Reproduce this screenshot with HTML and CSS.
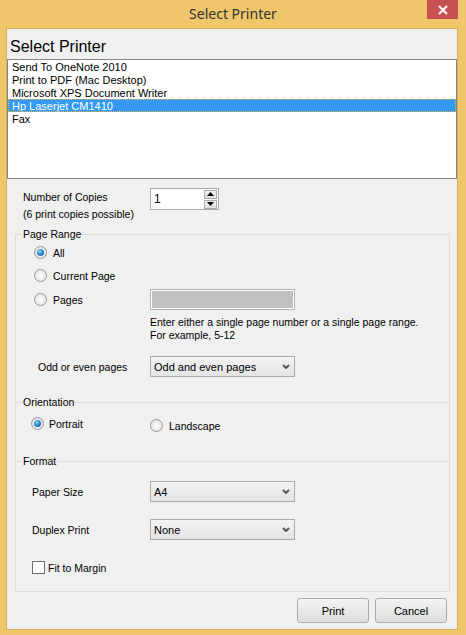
FILE: index.html
```html
<!DOCTYPE html>
<html>
<head>
<meta charset="utf-8">
<title>Select Printer</title>
<link rel="stylesheet" href="styles.css">
</head>
<body>
<div class="window">
  <div class="titlebar">
    <span></span>
    <div class="title">Select Printer</div>
    <div class="close">
      <svg width="10" height="10" viewBox="0 0 10 10"><path d="M1 1 L9 9 M9 1 L1 9" stroke="#fff" stroke-width="2" fill="none"/></svg>
    </div>
  </div>
  <div class="client">
    <div class="heading">Select Printer</div>
    <ul class="list">
      <li>Send To OneNote 2010</li>
      <li>Print to PDF (Mac Desktop)</li>
      <li>Microsoft XPS Document Writer</li>
      <li class="selected">Hp Laserjet CM1410</li>
      <li>Fax</li>
    </ul>

    <div class="copies">
      <div class="copies-label">
        <div class="line17">Number of Copies</div>
        <div class="line17">(6 print copies possible)</div>
      </div>
      <div class="spin">
        <span class="spin-value">1</span>
        <div class="spin-btns">
          <span class="spin-btn"><svg width="7" height="4" viewBox="0 0 7 4"><path d="M3.5 0 L7 4 L0 4 Z" fill="#000"/></svg></span>
          <span class="spin-btn"><svg width="7" height="4" viewBox="0 0 7 4"><path d="M0 0 L7 0 L3.5 4 Z" fill="#000"/></svg></span>
        </div>
      </div>
    </div>

    <section class="group group-range">
      <div class="legend">Page Range</div>
      <div class="group-body">
        <div class="radio-row"><span class="radio checked"></span><span>All</span></div>
        <div class="radio-row"><span class="radio"></span><span>Current Page</span></div>
        <div class="pages-row">
          <div class="radio-row tight"><span class="radio"></span><span>Pages</span></div>
          <div class="pages-input"></div>
        </div>
        <div class="help">Enter either a single page number or a single page range.<br>For example, 5-12</div>
        <div class="field-row odd-row">
          <span class="field-label">Odd or even pages</span>
          <div class="select"><span>Odd and even pages</span><svg class="chev" width="8" height="5" viewBox="0 0 8 5"><path d="M1 1 L4 4 L7 1" stroke="#555" stroke-width="2" fill="none"/></svg></div>
        </div>
      </div>
    </section>

    <section class="group group-orient">
      <div class="legend">Orientation</div>
      <div class="group-body">
        <div class="orient-row">
          <div class="orient-item"><span class="radio checked"></span><span>Portrait</span></div>
          <div class="orient-item landscape"><span class="radio"></span><span>Landscape</span></div>
        </div>
      </div>
    </section>

    <section class="group group-format">
      <div class="legend">Format</div>
      <div class="group-body">
        <div class="field-row paper-row">
          <span class="field-label">Paper Size</span>
          <div class="select"><span>A4</span><svg class="chev" width="8" height="5" viewBox="0 0 8 5"><path d="M1 1 L4 4 L7 1" stroke="#555" stroke-width="2" fill="none"/></svg></div>
        </div>
        <div class="field-row duplex-row">
          <span class="field-label">Duplex Print</span>
          <div class="select"><span>None</span><svg class="chev" width="8" height="5" viewBox="0 0 8 5"><path d="M1 1 L4 4 L7 1" stroke="#555" stroke-width="2" fill="none"/></svg></div>
        </div>
        <div class="check-row"><span class="checkbox"></span><span>Fit to Margin</span></div>
      </div>
    </section>

    <div class="buttons">
      <div class="btn">Print</div>
      <div class="btn">Cancel</div>
    </div>
  </div>
</div>
</body>
</html>
```

FILE: styles.css
```css
* { box-sizing: border-box; }
html, body {
  margin: 0;
  padding: 0;
  background: #efc66a;
}
body {
  font-family: "Liberation Sans", Arial, sans-serif;
  font-size: 10.5px;
  color: #000;
}
.window {
  width: 466px;
  height: 635px;
  background: #efc66a;
  display: flex;
  flex-direction: column;
  overflow: hidden;
}
.titlebar {
  height: 28px;
  display: grid;
  grid-template-columns: 1fr auto 1fr;
  align-items: start;
}
.title {
  font-family: "Noto Sans", "Open Sans", sans-serif;
  font-size: 14px;
  line-height: 27px;
  color: #333;
}
.close {
  justify-self: end;
  margin-right: 8px;
  width: 31px;
  height: 19px;
  background: #c75050;
  display: flex;
  align-items: center;
  justify-content: center;
}
.client {
  margin: 0 8px 5px 6px;
  border: 1px solid #d7ad55;
  background: #f0f0f0;
  height: 602px;
  overflow: hidden;
  display: flex;
  flex-direction: column;
}
.heading {
  font-size: 16px;
  line-height: 20px;
  margin-top: 8px;
  padding-left: 3px;
}
.list {
  list-style: none;
  margin: 2px 0 0 0;
  padding: 0;
  height: 120px;
  background: #fff;
  border: 1px solid #828790;
  font-size: 11px;
}
.list li {
  height: 13px;
  line-height: 14px;
  padding-left: 4px;
  white-space: nowrap;
}
.list li.selected {
  background: #3399ff;
  color: #fff;
  outline: 1px dotted #e9b65e;
  outline-offset: -1px;
}
.copies {
  display: flex;
  align-items: flex-start;
  margin-top: 9px;
  padding-left: 16px;
}
.copies-label {
  width: 127px;
  margin-top: 1px;
}
.line17 {
  line-height: 17px;
}
.spin {
  width: 69px;
  height: 22px;
  border: 1px solid #aaaaaa;
  background: #fff;
  display: flex;
  align-items: center;
  justify-content: space-between;
  padding-left: 3px;
}
.spin-value {
  font-size: 12px;
}
.spin-btns {
  display: flex;
  flex-direction: column;
  gap: 1px;
  margin-right: 1px;
}
.spin-btn {
  width: 13px;
  height: 9px;
  border: 1px solid #acacac;
  background: linear-gradient(#f2f2f2, #dedede);
  display: flex;
  align-items: center;
  justify-content: center;
}
.group {
  margin-left: 8px;
  margin-right: 7px;
  border: 1px solid #dcdcdc;
  border-bottom: none;
  display: flex;
  flex-direction: column;
}
.legend {
  align-self: flex-start;
  margin-top: -7px;
  margin-left: 6px;
  padding: 0 1px;
  line-height: 13px;
  background: #f0f0f0;
}
.group-range {
  margin-top: 11px;
}
.group-range .group-body {
  padding-left: 18px;
  padding-bottom: 25px;
}
.radio-row {
  display: flex;
  align-items: center;
  gap: 6px;
  height: 23px;
}
.radio-row.tight {
  height: auto;
}
.radio {
  width: 13px;
  height: 13px;
  border-radius: 50%;
  border: 1px solid #9a9a9a;
  background: radial-gradient(circle at 50% 50%, #ffffff 0%, #eeeeee 45%, #d6d6d6 100%);
  flex: none;
  display: flex;
  align-items: center;
  justify-content: center;
}
.radio.checked::after {
  content: "";
  width: 7px;
  height: 7px;
  border-radius: 50%;
  background: radial-gradient(circle at 40% 35%, #9ddcfb 0%, #2f86d2 45%, #0d4a8c 100%);
}
.pages-row {
  display: grid;
  grid-template-columns: 116px 145px;
  align-items: center;
  height: 25px;
}
.pages-input {
  height: 21px;
  border: 1px solid #b5b5b5;
  box-shadow: inset 0 0 0 1px #ffffff;
  background: #c0c0c0;
}
.help {
  margin-top: 4px;
  margin-left: 116px;
  line-height: 13px;
}
.field-row {
  display: grid;
  align-items: center;
}
.odd-row {
  margin-top: 14px;
  grid-template-columns: 116px 145px;
}
.odd-row .field-label {
  padding-left: 4px;
}
.select {
  height: 21px;
  border: 1px solid #acacac;
  background: linear-gradient(#f3f3f3, #e4e4e4);
  display: flex;
  align-items: center;
  justify-content: space-between;
  padding: 0 4px 0 3px;
  font-size: 11px;
}
.chev {
  display: block;
}
.group-orient .group-body {
  padding-left: 15px;
  padding-bottom: 28px;
}
.orient-row {
  display: grid;
  grid-template-columns: 119px auto;
  align-items: start;
  margin-top: 7px;
}
.orient-item {
  display: flex;
  align-items: center;
  gap: 5px;
  height: 15px;
}
.orient-item.landscape {
  margin-top: 2px;
  gap: 6px;
}
.group-format {
  border-bottom: 1px solid #dcdcdc;
}
.group-format .group-body {
  padding-left: 16px;
  padding-bottom: 17px;
}
.paper-row, .duplex-row {
  grid-template-columns: 118px 145px;
}
.paper-row {
  margin-top: 13px;
}
.duplex-row {
  margin-top: 17px;
}
.check-row {
  margin-top: 21px;
  display: flex;
  align-items: center;
  gap: 3px;
  height: 13px;
}
.checkbox {
  width: 13px;
  height: 13px;
  border: 1px solid #707070;
  background: #fff;
  flex: none;
}
.buttons {
  display: flex;
  justify-content: flex-end;
  gap: 6px;
  margin-top: 6px;
  padding-right: 10px;
}
.btn {
  width: 72px;
  height: 25px;
  border: 1px solid #acacac;
  border-radius: 3px;
  background: linear-gradient(#f4f4f4, #dddddd);
  display: flex;
  align-items: center;
  justify-content: center;
  font-size: 11px;
}
```
